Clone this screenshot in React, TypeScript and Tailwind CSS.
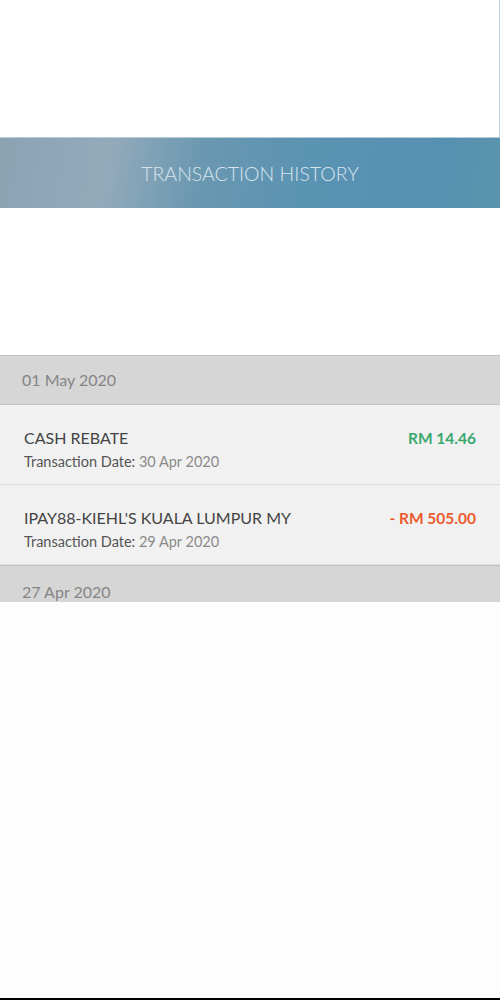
import React from 'react';

interface Transaction {
  title: string;
  date: string;
  amount: string;
  credit: boolean;
}

interface DayGroup {
  day: string;
  items: Transaction[];
}

const groups: DayGroup[] = [
  {
    day: '01 May 2020',
    items: [
      { title: 'CASH REBATE', date: '30 Apr 2020', amount: 'RM 14.46', credit: true },
      {
        title: "IPAY88-KIEHL'S KUALA LUMPUR MY",
        date: '29 Apr 2020',
        amount: '- RM 505.00',
        credit: false,
      },
    ],
  },
];

function DayHeader({ day }: { day: string }) {
  return (
    <div className="h-[50px] bg-[#d6d6d6] border-t border-b border-[#c2c2c2] flex items-center pl-[22px]">
      <span className="text-[16px] text-[#858585]">{day}</span>
    </div>
  );
}

function TransactionRow({ tx }: { tx: Transaction }) {
  return (
    <div className="h-[80px] bg-[#f1f1f1] border-b border-[#dcdcdc] flex justify-between px-6 pt-[22px]">
      <div className="flex flex-col">
        <span className="text-[16px] leading-[22px] text-[#444]">{tx.title}</span>
        <span className="text-[14.5px] leading-[20px] mt-[3px] text-[#555]">
          Transaction Date: <span className="text-[#8a8a8a]">{tx.date}</span>
        </span>
      </div>
      <span
        className={`text-[15.5px] leading-[22px] font-bold ${
          tx.credit ? 'text-[#3aa86e]' : 'text-[#ec5a2e]'
        }`}
      >
        {tx.amount}
      </span>
    </div>
  );
}

export default function App() {
  return (
    <div className="w-[500px] h-[1000px] bg-[#fdfdfd] flex flex-col font-['Lato','Noto_Sans',sans-serif] overflow-hidden">
      <div className="h-[137px] bg-white border-r border-[#b9cfdc]" />

      {/* banner */}
      <div className="h-[71px] flex items-center justify-center border-t border-[#b7cbd8] bg-[linear-gradient(100deg,#8aa3b3_0%,#93aabb_22%,#6a98b0_40%,#5b93b2_60%,#5690b3_85%,#5a94ab_100%)]">
        <h1 className="text-[19.5px] font-light mt-[2px] text-[#d9e5ee]">
          TRANSACTION HISTORY
        </h1>
      </div>

      <div className="h-[147px] bg-white" />

      {groups.map((g) => (
        <div key={g.day}>
          <DayHeader day={g.day} />
          {g.items.map((tx) => (
            <TransactionRow key={tx.title} tx={tx} />
          ))}
        </div>
      ))}

      <div className="h-[37px] bg-[#d6d6d6] border-t border-[#c2c2c2] overflow-hidden pl-[22px] pt-[14px]">
        <span className="text-[16px] text-[#858585]">27 Apr 2020</span>
      </div>

      <div className="flex-1" />
      <div className="h-[2px] bg-black" />
    </div>
  );
}
